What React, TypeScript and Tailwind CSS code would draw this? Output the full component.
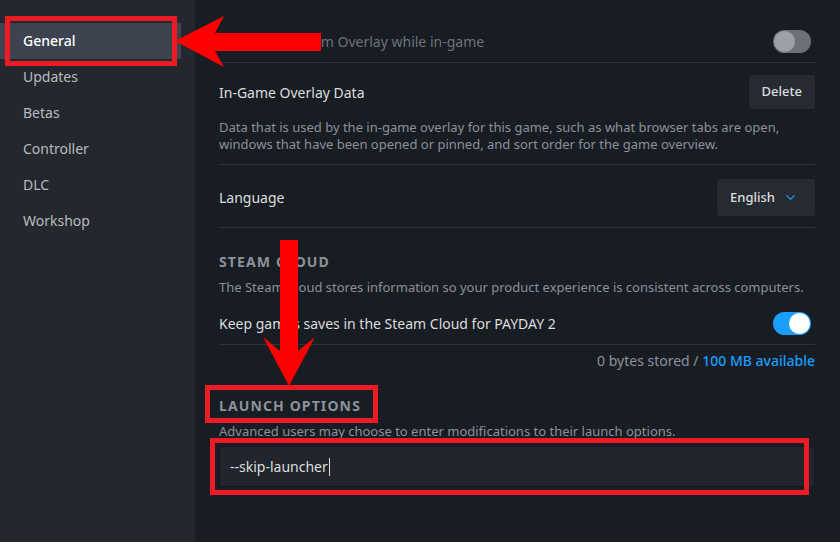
import { ChevronDown } from "lucide-react";

const navItems = ["General", "Updates", "Betas", "Controller", "DLC", "Workshop"];

function Toggle({ on }: { on: boolean }) {
  return (
    <div
      className={`mr-[4px] flex h-[23px] w-[38px] items-center rounded-full px-[1px] ${
        on ? "justify-end bg-[#1a9fff]" : "justify-start bg-[#6b7079]"
      }`}
    >
      <div className={`h-[21px] w-[21px] rounded-full ${on ? "bg-white" : "bg-[#9ca1a8]"}`} />
    </div>
  );
}

function Annotations() {
  return (
    <div className="pointer-events-none absolute inset-0">
      <svg className="absolute inset-0" width="840" height="542" viewBox="0 0 840 542">
        <polygon
          points="175,41 224,16 215,33 321,33 321,51 215,51 224,67"
          fill="#ff0000"
        />
        <polygon
          points="280,240 298,240 298,351 315,337 289,386 263,337 280,351"
          fill="#ff0000"
        />
      </svg>
      <div className="absolute left-[5px] top-[16px] h-[50px] w-[172px] border-[5px] border-[#ed1c24]" />
      <div className="absolute left-[205px] top-[385px] h-[38px] w-[173px] border-[5px] border-[#ed1c24]" />
      <div className="absolute left-[210px] top-[438px] h-[57px] w-[599px] border-[5px] border-[#ed1c24]" />
    </div>
  );
}

export default function App() {
  return (
    <div
      className="relative flex h-[542px] w-[840px] overflow-hidden bg-[#181c23] text-[14px] text-[#dcdedf]"
      style={{ fontFamily: '"Noto Sans", "Open Sans", sans-serif' }}
    >
      <aside className="w-[195px] shrink-0 bg-[#24272e] pt-[23px]">
        {navItems.map((item, i) => (
          <div
            key={item}
            className={`flex h-9 w-[181px] items-center px-[23px] pb-[1px] text-[14px] ${
              i === 0 ? "bg-[#3d4450] font-medium text-white" : "text-[#b8bcbf]"
            }`}
          >
            {item}
          </div>
        ))}
      </aside>

      <main className="flex-1 pl-6 pr-[25px] pt-[20px]">
        <div className="flex h-[43px] items-center justify-between border-b border-[#2e323a]">
          <span className="text-[#6e737b]">Enable the Steam Overlay while in-game</span>
          <Toggle on={false} />
        </div>

        <div className="border-b border-[#2e323a] pb-[11px] pt-[12px]">
          <div className="flex items-center justify-between">
            <span>In-Game Overlay Data</span>
            <button className="h-[34px] rounded-[3px] bg-[#262a32] px-[13px] text-[13px] font-medium text-[#dcdedf]">
              Delete
            </button>
          </div>
          <p className="mt-[10px] text-[13px] leading-[17px] text-[#8b929a]">
            Data that is used by the in-game overlay for this game, such as what browser tabs are open,
            windows that have been opened or pinned, and sort order for the game overview.
          </p>
        </div>

        <div className="flex items-center justify-between border-b border-[#2e323a] pb-[11px] pt-[14px]">
          <span>Language</span>
          <div className="flex h-[37px] items-center gap-[8px] rounded-[3px] bg-[#262a32] pl-[13px] pr-[17px] text-[13px] font-medium">
            English
            <ChevronDown size={15} strokeWidth={2} className="text-[#1a9fff]" />
          </div>
        </div>

        <h2 className="mt-[24px] text-[14px] font-bold uppercase leading-[20px] tracking-[0.08em] text-[#8b929a]">
          Steam Cloud
        </h2>
        <p className="mt-[5px] text-[13px] leading-[20px] text-[#8b929a]">
          The Steam Cloud stores information so your product experience is consistent across computers.
        </p>
        <div className="flex h-[48px] items-center justify-between border-b border-[#2e323a] pt-[6px]">
          <span>Keep games saves in the Steam Cloud for PAYDAY 2</span>
          <Toggle on={true} />
        </div>
        <div className="mt-[6px] text-right leading-[20px] text-[#8b929a]">
          0 bytes stored / <span className="font-medium text-[#1a9fff]">100 MB available</span>
        </div>

        <h2 className="mt-[25px] text-[14px] font-bold uppercase leading-[20px] tracking-[0.08em] text-[#8b929a]">
          Launch Options
        </h2>
        <p className="mt-[5px] text-[13px] leading-[20px] text-[#8b929a]">
          Advanced users may choose to enter modifications to their launch options.
        </p>
        <div className="mt-[5px] flex h-[41px] items-center rounded-[3px] border border-[#14171c] bg-[#22252d] px-[10px]">
          <span className="text-[#dcdedf]">--skip-launcher</span>
          <span className="ml-[1px] h-[18px] w-[1px] bg-[#dcdedf]" />
        </div>
      </main>

      <Annotations />
    </div>
  );
}
